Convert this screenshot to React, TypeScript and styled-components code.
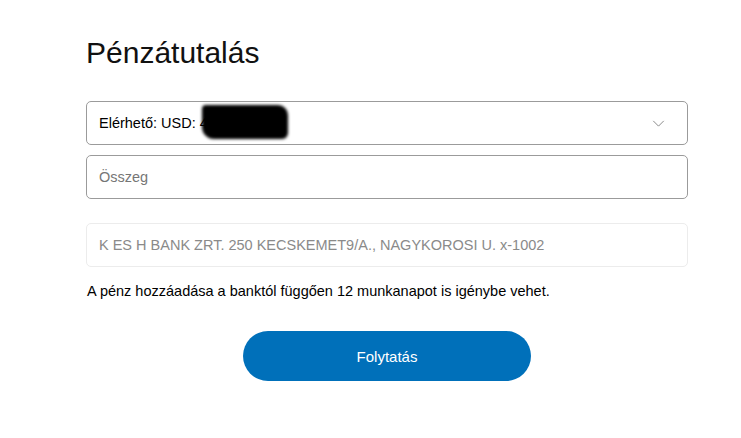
import React from 'react';
import styled, { createGlobalStyle } from 'styled-components';

const GlobalStyle = createGlobalStyle`
  body {
    margin: 0;
    background: #ffffff;
    font-family: "Liberation Sans", Arial, sans-serif;
    color: #000;
  }
`;

// -------- main component ---------- //
const App = () => {
  return (
    <>
      <GlobalStyle />
      <Page>
        <Title>Pénzátutalás</Title>
        <Field>
          <FieldText>Elérhető: USD: 4</FieldText>
          <Redaction />
          <Chevron viewBox="0 0 14 8" width="13" height="7">
            <path d="M1 1 L7 7 L13 1" fill="none" stroke="#7a7a7a" strokeWidth="1" />
          </Chevron>
        </Field>
        <Field $top={10}>
          <FieldText $muted>Összeg</FieldText>
        </Field>
        <BankBox>
          K ES H BANK ZRT. 250 KECSKEMET9/A., NAGYKOROSI U. x-1002
        </BankBox>
        <Note>A pénz hozzáadása a banktól függően 12 munkanapot is igénybe vehet.</Note>
        <ButtonRow>
          <PrimaryButton>Folytatás</PrimaryButton>
        </ButtonRow>
      </Page>
    </>
  );
};

// ----------- styling ---------- //
const Page = styled.div`
  display: flex;
  flex-direction: column;
  width: 602px;
  padding: 36px 0 0 86px;
`;

const Title = styled.h1`
  margin: 0 0 31px 0;
  font-size: 30px;
  font-weight: 400;
  line-height: 34px;
  color: #111;
`;

const Field = styled.div<{ $top?: number }>`
  position: relative;
  display: flex;
  align-items: center;
  height: 42px;
  margin-top: ${(p) => p.$top || 0}px;
  padding: 0 12px;
  border: 1px solid #9b9b9b;
  border-radius: 5px;
  background: #fff;
`;

const FieldText = styled.span<{ $muted?: boolean }>`
  font-size: 14.5px;
  color: ${(p) => (p.$muted ? '#767676' : '#000')};
`;

const Redaction = styled.span`
  position: absolute;
  left: 115px;
  top: 3px;
  width: 86px;
  height: 34px;
  background: #000;
  border-radius: 4px 10px 6px 12px;
  filter: blur(1.5px);
`;

const Chevron = styled.svg`
  margin-left: auto;
  margin-right: 10px;
`;

const BankBox = styled.div`
  display: flex;
  align-items: center;
  height: 42px;
  margin-top: 24px;
  padding: 0 12px;
  border: 1px solid #ececec;
  border-radius: 5px;
  font-size: 14.5px;
  color: #8a8a8a;
`;

const Note = styled.p`
  margin: 16px 0 0 1px;
  font-size: 14.5px;
  line-height: 17px;
`;

const ButtonRow = styled.div`
  display: flex;
  justify-content: center;
  margin-top: 31px;
`;

const PrimaryButton = styled.button`
  width: 288px;
  height: 50px;
  border: none;
  border-radius: 25px;
  background: #0070ba;
  color: #fff;
  font-family: "Liberation Sans", Arial, sans-serif;
  font-size: 15px;
  cursor: pointer;
`;

export default App;
